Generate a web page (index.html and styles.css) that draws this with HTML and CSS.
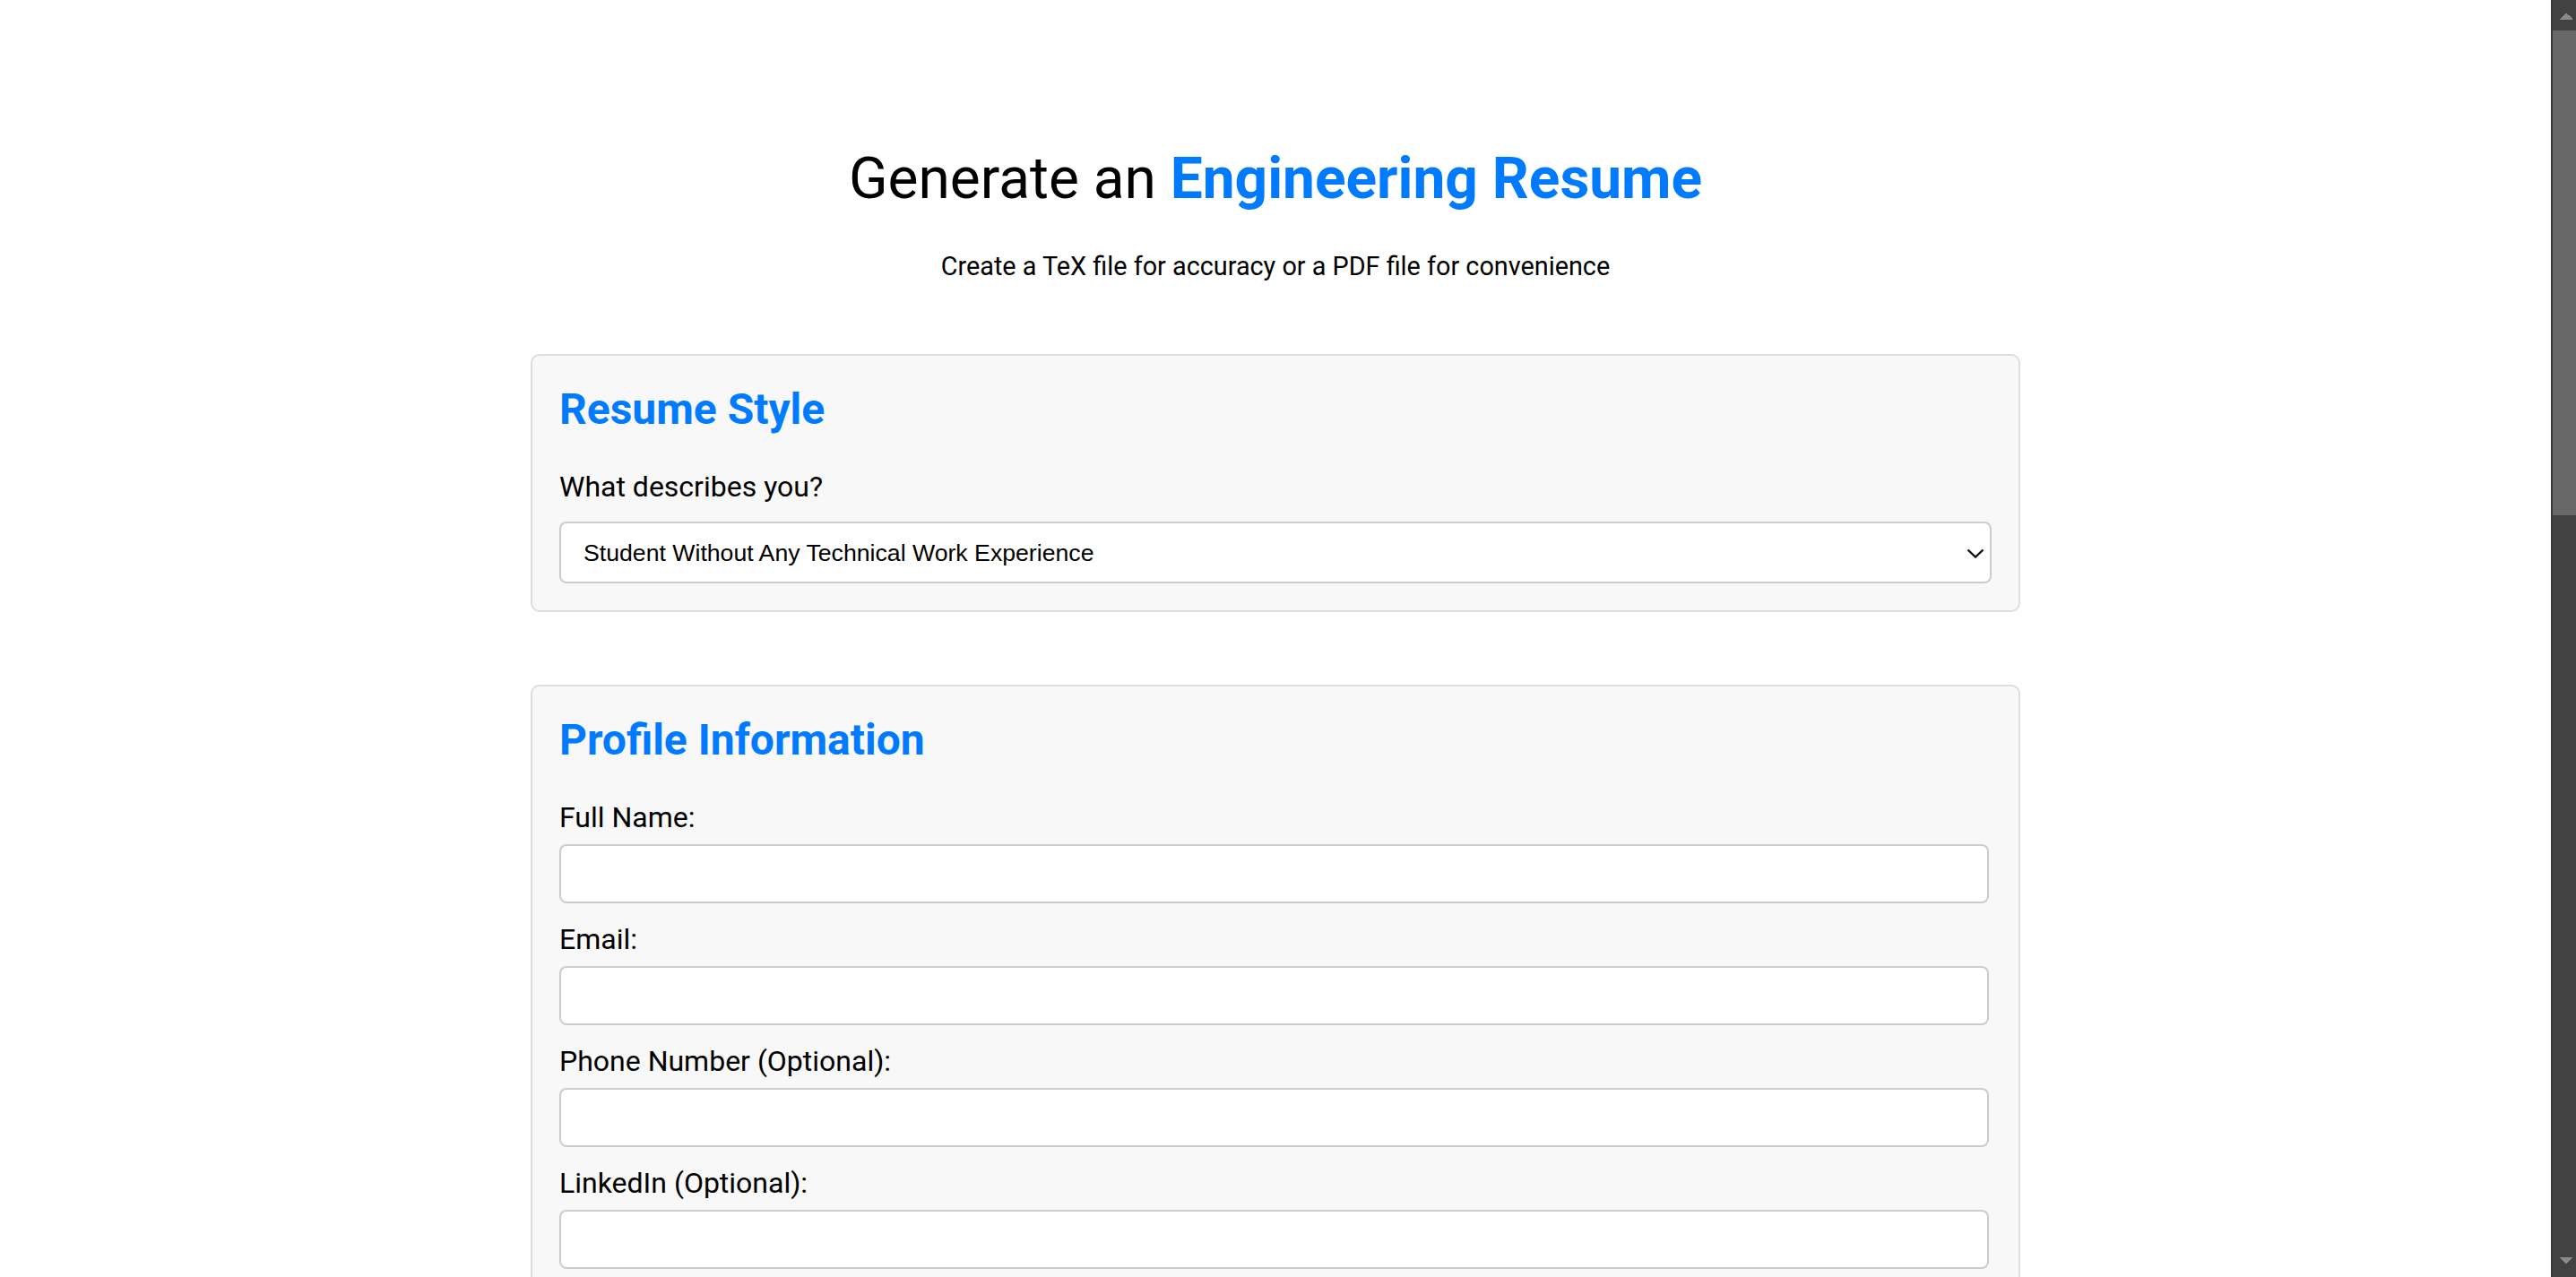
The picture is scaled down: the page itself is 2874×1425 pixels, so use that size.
FILE: index.html
```html
<!DOCTYPE html>
<html lang="en">
<head>
<meta charset="utf-8">
<title>Generate an Engineering Resume</title>
<link rel="stylesheet" href="styles.css">
</head>
<body>
<main class="page">
  <header class="intro">
    <h1 class="title">Generate an <span class="accent">Engineering Resume</span></h1>
    <p class="subtitle">Create a TeX file for accuracy or a PDF file for convenience</p>
  </header>

  <form class="resume-form">
    <section class="card">
      <h2 class="card-title">Resume Style</h2>
      <label class="field-label field-label--select" for="style">What describes you?</label>
      <div class="select-wrap">
        <select id="style" class="select">
          <option>Student Without Any Technical Work Experience</option>
          <option>Student With Technical Work Experience</option>
          <option>Experienced Engineer</option>
        </select>
        <svg class="select-chevron" viewBox="0 0 20 11" width="20" height="11" aria-hidden="true">
          <path d="M1.5 1.5 L10 9.5 L18.5 1.5" fill="none" stroke="#111" stroke-width="2.4"/>
        </svg>
      </div>
    </section>

    <section class="card">
      <h2 class="card-title">Profile Information</h2>
      <label class="field-label" for="name">Full Name:</label>
      <input class="text-input" id="name" type="text">
      <label class="field-label" for="email">Email:</label>
      <input class="text-input" id="email" type="email">
      <label class="field-label" for="phone">Phone Number (Optional):</label>
      <input class="text-input" id="phone" type="text">
      <label class="field-label" for="linkedin">LinkedIn (Optional):</label>
      <input class="text-input" id="linkedin" type="text">
    </section>
  </form>
</main>

<div class="scrollbar" aria-hidden="true">
  <div class="scroll-btn scroll-btn--up"></div>
  <div class="scroll-track">
    <div class="scroll-thumb"></div>
  </div>
  <div class="scroll-btn scroll-btn--down"></div>
</div>
</body>
</html>
```

FILE: styles.css
```css
html {
  background: #ffffff;
}

body {
  margin: 0;
  padding-right: 28px;
  font-family: Roboto, "Noto Sans", "Liberation Sans", sans-serif;
  color: #111111;
  background: #ffffff;
}

.page {
  max-width: 1662px;
  margin: 0 auto;
  padding: 162px 0 60px;
}

.intro {
  text-align: center;
}

.title {
  margin: 0;
  font-size: 64px;
  line-height: 75px;
  font-weight: 400;
  color: #000000;
}

.accent {
  color: #007bff;
  font-weight: 700;
}

.subtitle {
  margin: 43px 0 81px;
  font-size: 28.8px;
  line-height: 34px;
  color: #000000;
}

.resume-form {
  display: flex;
  flex-direction: column;
}

.card {
  display: flex;
  flex-direction: column;
  align-items: flex-start;
  padding: 32px 30px 30px;
  margin-bottom: 81px;
  background: #f8f8f8;
  border: 2px solid #dddddd;
  border-radius: 10px;
}

.card-title {
  margin: 0 0 38px;
  font-size: 48px;
  line-height: 56px;
  font-weight: 700;
  color: #007bff;
}

.field-label {
  display: block;
  margin-bottom: 9.5px;
  font-size: 32px;
  line-height: 40px;
  color: #000000;
}

.field-label--select {
  margin-bottom: 19px;
}

.select-wrap {
  position: relative;
  width: 100%;
}

.select {
  display: block;
  width: 100%;
  height: 69px;
  box-sizing: border-box;
  padding: 0 60px 0 25px;
  font-family: "Liberation Sans", Arial, sans-serif;
  font-size: 26.67px;
  color: #000000;
  background: #ffffff;
  border: 2px solid #cccccc;
  border-radius: 8px;
  appearance: none;
  -webkit-appearance: none;
}

.select-chevron {
  position: absolute;
  right: 8px;
  top: 30px;
  pointer-events: none;
}

.text-input {
  display: block;
  width: calc(100% - 3px);
  height: 66px;
  box-sizing: border-box;
  margin: 0 0 20.5px;
  padding: 0 16px;
  font-family: "Liberation Sans", Arial, sans-serif;
  font-size: 26.67px;
  background: #ffffff;
  border: 2px solid #cccccc;
  border-radius: 8px;
}

/* window scrollbar drawn over the right edge of the page */
.scrollbar {
  position: fixed;
  top: 0;
  right: 0;
  bottom: 0;
  width: 28px;
  display: flex;
  flex-direction: column;
  background: #424242;
  box-shadow: inset 2px 0 0 #393939;
}

.scroll-btn {
  flex: 0 0 34px;
  position: relative;
}

.scroll-btn--up {
  background:
    linear-gradient(to top left, #8a8a8a 50%, transparent 50%) 9px 14px / 8px 8px no-repeat,
    linear-gradient(to top right, #8a8a8a 50%, transparent 50%) 17px 14px / 8px 8px no-repeat;
}

.scroll-btn--down {
  background:
    linear-gradient(to bottom left, #8a8a8a 50%, transparent 50%) 9px 12px / 8px 8px no-repeat,
    linear-gradient(to bottom right, #8a8a8a 50%, transparent 50%) 17px 12px / 8px 8px no-repeat;
}

.scroll-track {
  flex: 1 1 auto;
  padding-left: 2px;
}

.scroll-thumb {
  height: 541px;
  background: #686868;
}
```
